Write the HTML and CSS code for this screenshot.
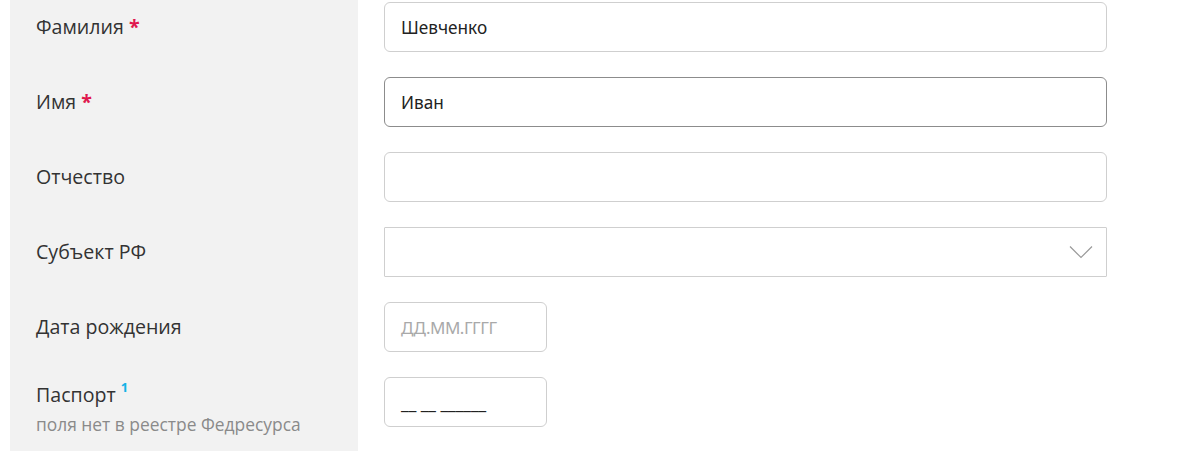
FILE: index.html
```html
<!DOCTYPE html>
<html lang="ru">
<head>
<meta charset="utf-8">
<link rel="stylesheet" href="styles.css">
</head>
<body>
<div class="form">
  <div class="label"><div class="text">Фамилия <span class="req">*</span></div></div>
  <div class="field"><div class="input">Шевченко</div></div>

  <div class="label"><div class="text">Имя <span class="req">*</span></div></div>
  <div class="field"><div class="input focus">Иван</div></div>

  <div class="label"><div class="text">Отчество</div></div>
  <div class="field"><div class="input"></div></div>

  <div class="label"><div class="text">Субъект РФ</div></div>
  <div class="field"><div class="input select">
    <svg class="chev" width="24" height="14" viewBox="0 0 24 14"><path d="M1 1.5 L12 12.5 L23 1.5" fill="none" stroke="#9a9a9a" stroke-width="1.2"/></svg>
  </div></div>

  <div class="label"><div class="text">Дата рождения</div></div>
  <div class="field"><div class="input short placeholder">ДД.ММ.ГГГГ</div></div>

  <div class="label last"><div><div class="title">Паспорт <sup class="note">1</sup></div><div class="sub">поля нет в реестре Федресурса</div></div></div>
  <div class="field"><div class="input short mask">__ __ ______</div></div>
</div>
</body>
</html>
```
FILE: styles.css
```css
html, body { margin: 0; padding: 0; background: #fff; }
body { font-family: "Open Sans", "Noto Sans", sans-serif; color: #333; }
.form {
  display: grid;
  grid-template-columns: 348px 723px;
  column-gap: 26px;
  margin-left: 10px;
}
.label {
  background: #f2f2f2;
  height: 75px;
  box-sizing: border-box;
  padding: 2px 0 0 26px;
  font-size: 19.6px;
}
.label .text { height: 50px; line-height: 50px; }
.label.last { height: 76px; padding-top: 7px; }
.title { line-height: 26px; }
.req { color: #e0184e; font-weight: 700; }
.note { color: #14b2e6; font-size: 13px; font-weight: 700; vertical-align: 0; position: relative; top: -10px; }
.sub { font-size: 17.4px; color: #8a8a8a; line-height: 24px; margin-top: 2px; }
.field { padding-top: 2px; }
.input {
  height: 50px;
  box-sizing: border-box;
  border: 1px solid #cfcfcf;
  border-radius: 6px;
  padding: 0 16px;
  display: flex;
  align-items: center;
  font-family: "Noto Sans", "Open Sans", sans-serif;
  font-size: 17.2px;
  color: #222;
  background: #fff;
}
.input.focus { border-color: #8c8c8c; }
.input.select { border-radius: 1px; justify-content: flex-end; padding-right: 13px; }
.input.short { width: 163px; }
.placeholder { color: #a9a9a9; font-size: 17px; letter-spacing: -0.5px; }
.mask { color: #222; letter-spacing: 0; }
```
